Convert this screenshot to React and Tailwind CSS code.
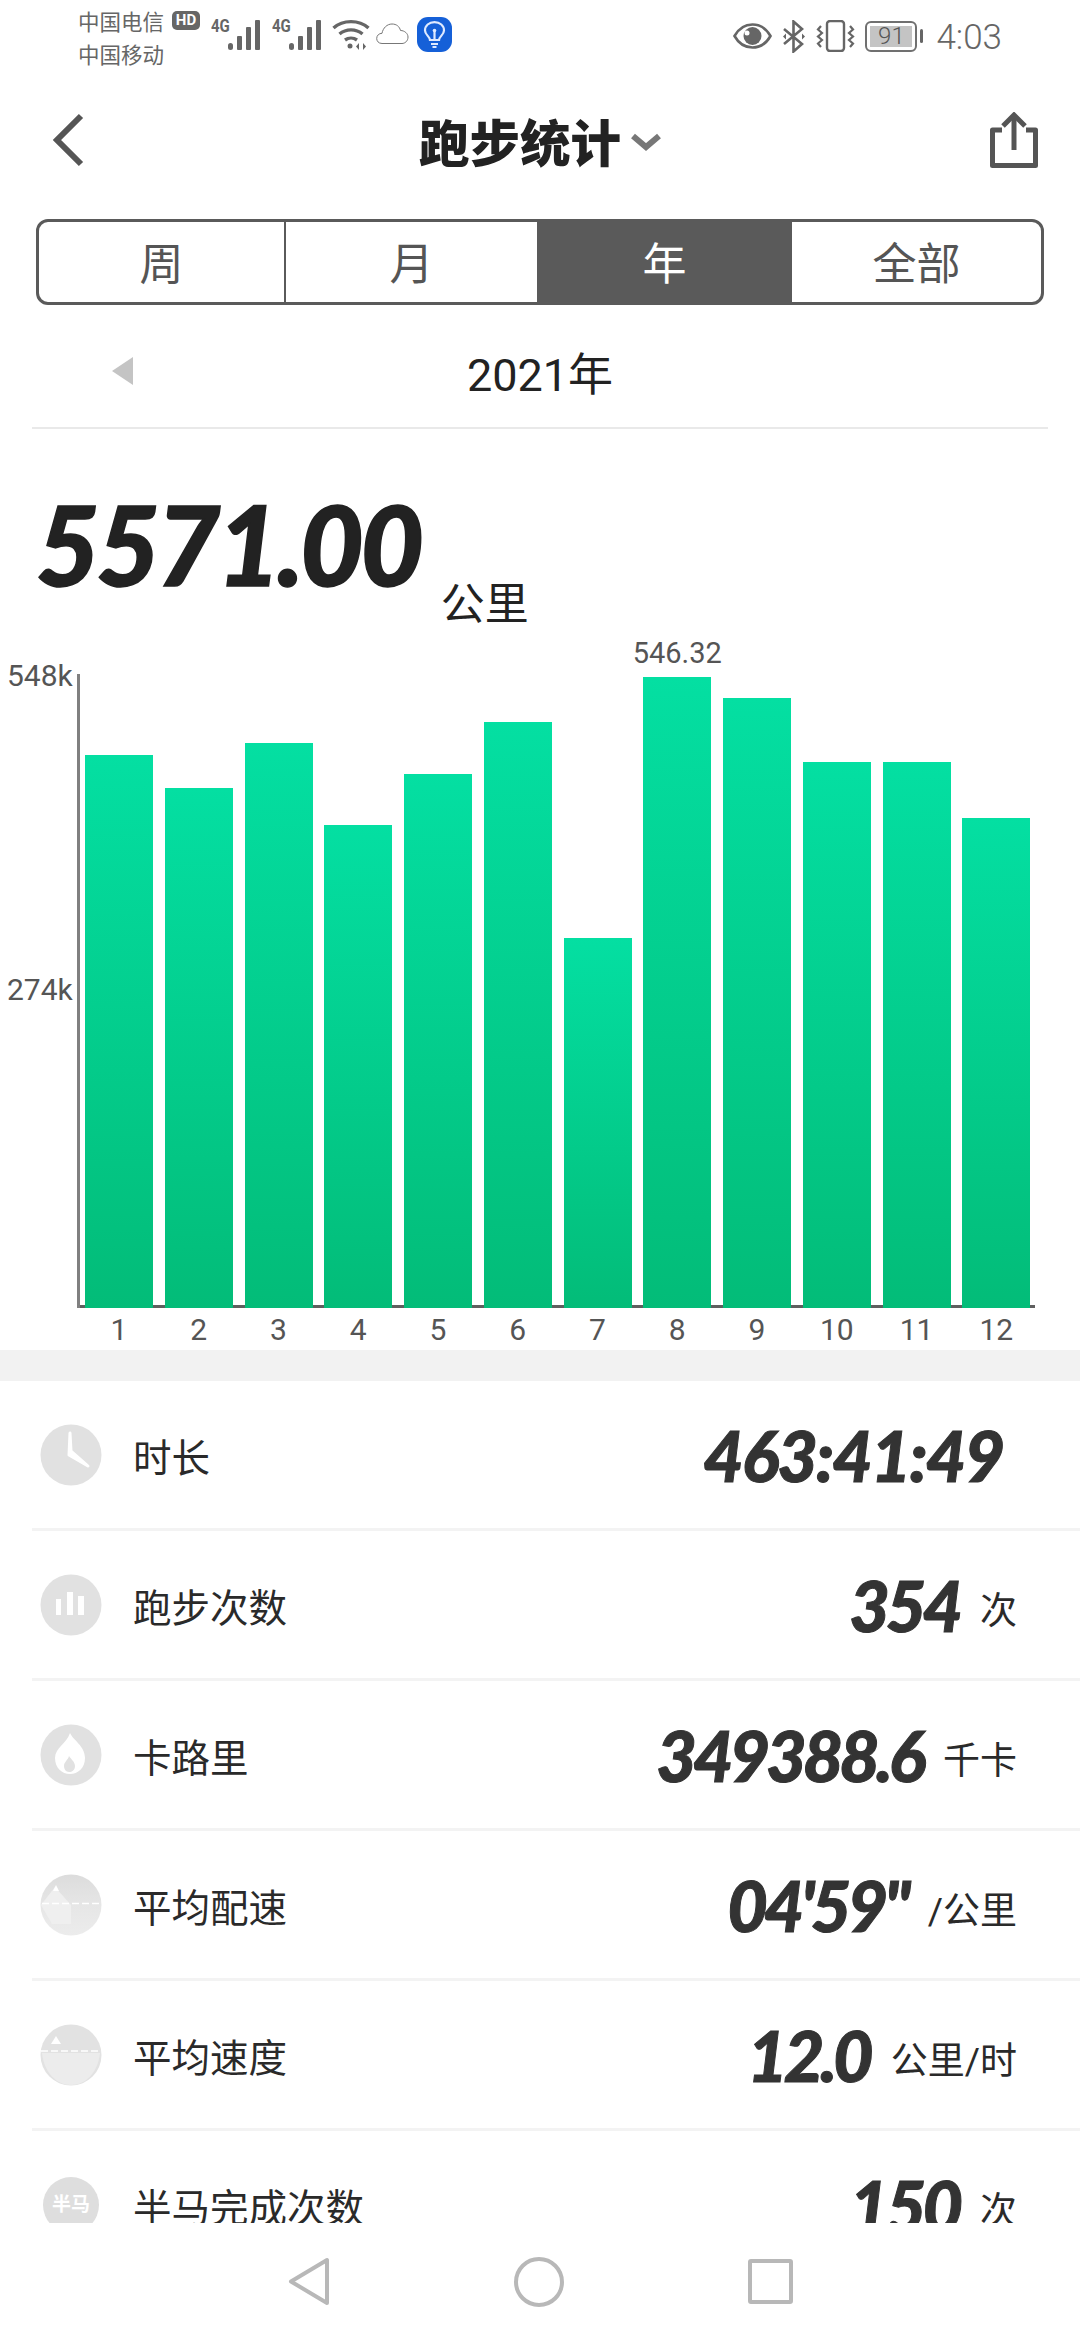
const bars = [
	{ label: '1', height: 553 },
	{ label: '2', height: 520 },
	{ label: '3', height: 565 },
	{ label: '4', height: 483 },
	{ label: '5', height: 534 },
	{ label: '6', height: 586 },
	{ label: '7', height: 370 },
	{ label: '8', height: 631, value: '546.32' },
	{ label: '9', height: 610 },
	{ label: '10', height: 546 },
	{ label: '11', height: 546 },
	{ label: '12', height: 490 },
];

const SignalIcon = () => (
	<svg width="32" height="32" viewBox="0 0 32 32" className="block shrink-0">
		<rect x="0" y="24" width="5" height="7" rx="2.500" fill="#666" />
		<rect x="9" y="17" width="5" height="14" rx="1" fill="#666" />
		<rect x="18" y="8" width="5" height="23" rx="1" fill="#666" />
		<rect x="27" y="1" width="5" height="30" rx="1" fill="#666" />
	</svg>
);

const WifiIcon = () => (
	<svg width="38" height="32" viewBox="0 0 38 32" fill="none" stroke="#666" strokeWidth="3.400" className="block">
		<path d="M1.500 9 C11 0.500 27 0.500 36.500 9" />
		<path d="M7.500 15 C14 9.500 24 9.500 30.500 15" />
		<path d="M13 21 C16.500 18.500 21.500 18.500 25 21" />
		<circle cx="18" cy="27" r="2.500" fill="#666" stroke="none" />
		<path d="M27 24 L24 27.500 L27 31 Z M31 24 L34 27.500 L31 31 Z" fill="#666" stroke="none" />
	</svg>
);

const CloudIcon = () => (
	<svg width="33" height="22" viewBox="0 0 33 22" fill="none" stroke="#777" strokeWidth="1" className="block">
		<path d="M6 20.500 C2.500 20.500 0.700 18 0.700 15.500 C0.700 12.500 3 10.300 6 10.300 C7 5 11 1 16 1 C20.500 1 23.500 3.500 24.500 7.500 C28.500 7.500 32 10.500 32 14 C32 18 29 20.500 26 20.500 Z" />
	</svg>
);

const BulbIcon = () => (
	<div className="w-[35px] h-[35px] rounded-[11px] bg-[#1560d8] flex items-center justify-center">
		<svg width="23" height="27" viewBox="0 0 23 27" fill="none" stroke="#dfeaff" strokeWidth="2.200">
			<path d="M7 19 C7 15.500 2 14 2 9.500 C2 4.500 6 1.200 11.500 1.200 C17 1.200 21 4.500 21 9.500 C21 14 16 15.500 16 19 Z" />
			<path d="M8 23 H15 M9.500 26 H13.500" />
			<circle cx="11.500" cy="9.500" r="1.800" fill="#dfeaff" stroke="none" />
			<path d="M11.500 10 V18" />
		</svg>
	</div>
);

const EyeIcon = () => (
	<svg width="39" height="26" viewBox="0 0 39 26" className="block">
		<path d="M1.500 13 C6 5 12 1.500 19.500 1.500 C27 1.500 33 5 37.500 13 C33 21 27 24.500 19.500 24.500 C12 24.500 6 21 1.500 13 Z" fill="none" stroke="#666" strokeWidth="2.600" />
		<circle cx="19.500" cy="13" r="9" fill="#666" />
		<circle cx="14" cy="10" r="2.500" fill="#fff" />
	</svg>
);

const BluetoothIcon = () => (
	<svg width="24" height="33" viewBox="0 0 24 33" fill="none" stroke="#666" strokeWidth="2.600" className="block">
		<path d="M2 9 L20 24 L11.500 31.500 V1.500 L20 9 L2 24" />
		<path d="M1 16.500 L4 13.500 V19.500 Z M23 16.500 L20 13.500 V19.500 Z" fill="#666" stroke="none" />
	</svg>
);

const VibrateIcon = () => (
	<svg width="39" height="32" viewBox="0 0 39 32" fill="none" stroke="#666" className="block">
		<rect x="11" y="1" width="17" height="30" rx="3" strokeWidth="2.400" />
		<path d="M5 6 L2 9.500 L6 13 L2 16.500 L6 20 L2 23.500 L5 27" strokeWidth="2.200" />
		<path d="M34 6 L37 9.500 L33 13 L37 16.500 L33 20 L37 23.500 L34 27" strokeWidth="2.200" />
	</svg>
);

const Battery = () => (
	<div className="flex items-center gap-[3px]">
		<div className="w-[52px] h-[31px] rounded-[6px] border-[2.500px] border-[#707070] p-[3px] flex">
			<div className="flex-1 bg-[#c4c4c4] flex items-center justify-center text-[24px] leading-none text-[#555] font-light">91</div>
		</div>
		<div className="w-[3px] h-[14px] bg-[#666] rounded-sm" />
	</div>
);

const CircleIcon = ({ children }) => (
	<svg width="62" height="62" viewBox="0 0 62 62" className="block shrink-0">
		<circle cx="31" cy="31" r="30.500" fill="#e1e1e1" />
		{children}
	</svg>
);

const ClockIcon = () => (
	<CircleIcon>
		<path d="M30 9 L29 31 L48 42 L31 27 Z" fill="#fff" stroke="#fff" strokeWidth="3" strokeLinejoin="round" />
	</CircleIcon>
);

const BarsIcon = () => (
	<CircleIcon>
		<rect x="16" y="25" width="5" height="16" fill="#fff" />
		<rect x="27" y="18" width="6" height="23" fill="#fff" />
		<rect x="38" y="22" width="6" height="19" fill="#fff" />
	</CircleIcon>
);

const FlameIcon = () => (
	<CircleIcon>
		<path d="M30 9 C33 16 45 22 45 34 C45 44 38 50 30 50 C22 50 15 44 15 34 C15 24 27 19 30 9 Z" fill="#fff" />
		<path d="M29 32 C31 35 35 38 35 42 C35 46 32 48 29 48 C26 48 24 45 24 42 C24 38 28 36 29 32 Z" fill="#e1e1e1" />
	</CircleIcon>
);

const PaceIcon = () => (
	<svg width="62" height="62" viewBox="0 0 62 62" className="block shrink-0">
		<defs>
			<linearGradient id="paceFill" x1="0" y1="0" x2="0" y2="1">
				<stop offset="0" stopColor="#dcdcdc" />
				<stop offset="0.5" stopColor="#e6e6e6" />
				<stop offset="1" stopColor="#ececec" />
			</linearGradient>
		</defs>
		<circle cx="31" cy="31" r="30.500" fill="url(#paceFill)" />
		<path d="M1 31 L15 13 L31 31 L31 50 L12 50 Z" fill="#efefef" />
		<path d="M13 17 L16 11 L19 17 Z" fill="#fff" />
		<path d="M2 29.500 H60" stroke="#fff" strokeWidth="1.500" strokeDasharray="7 3" />
	</svg>
);

const SpeedIcon = () => (
	<svg width="62" height="62" viewBox="0 0 62 62" className="block shrink-0">
		<circle cx="31" cy="31" r="30.500" fill="#e2e2e2" />
		<path d="M2 29 H60 C58 48 46 61 31 61 C16 61 4 48 2 29 Z" fill="#ececec" />
		<path d="M11 20 L16 12 L21 20 Z" fill="#fff" />
		<path d="M1 27 H61" stroke="#fff" strokeWidth="1.500" strokeDasharray="7 3" />
	</svg>
);

const HalfMarathonIcon = () => (
	<div className="w-[56px] h-[56px] rounded-full bg-[#dedede] flex items-center justify-center text-[19px] leading-none font-bold text-white shrink-0 mx-[3px]">
		半马
	</div>
);

const rows = [
	{ label: '时长', value: '463:41:49', unit: '', icon: <ClockIcon />, valueClass: 'tracking-[-2px] mr-[14px]' },
	{ label: '跑步次数', value: '354', unit: '次', icon: <BarsIcon /> },
	{ label: '卡路里', value: '349388.6', unit: '千卡', icon: <FlameIcon /> },
	{ label: '平均配速', value: `04'59"`, unit: '/公里', icon: <PaceIcon /> },
	{ label: '平均速度', value: '12.0', unit: '公里/时', icon: <SpeedIcon /> },
	{ label: '半马完成次数', value: '150', unit: '次', icon: <HalfMarathonIcon /> },
];

const StatRow = ({ label, value, unit, icon, valueClass }) => (
	<div className="h-[150px] shrink-0 border-b-[3px] border-[#f3f3f3] flex items-center pl-[8px] pr-[63px]">
		{icon}
		<span className="ml-[31px] mt-[10px] text-[38.500px] text-[#2a2a2a] leading-none">{label}</span>
		<div className="ml-auto flex items-baseline gap-[21px]">
			<span className={`font-['Lato',sans-serif] font-black italic text-[70px] leading-none text-[#333] [-webkit-text-stroke:1px_#333] ${valueClass || 'tracking-[-4px]'}`}>{value}</span>
			{unit && <span className="text-[37px] leading-none text-[#2a2a2a] -translate-y-[8px]">{unit}</span>}
		</div>
	</div>
);

export default function App() {
	return (
		<div className="w-[1080px] h-[2340px] bg-white flex flex-col overflow-hidden font-['Roboto','Noto_Sans_CJK_SC',sans-serif]">
			<div className="flex-1 min-h-0 overflow-hidden">
				{/* status bar */}
				<div className="h-[76px] flex pl-[78px] pr-[78px] pt-[6px]">
					<div className="text-[21.500px] leading-[33px] text-[#666] w-[94px] shrink-0 flex flex-col whitespace-nowrap">
						<div className="relative">
							中国电信
							<span className="absolute left-[94px] top-[5px] w-[28px] h-[19px] rounded-[5px] bg-[#666] text-white text-[15px] leading-[19px] font-bold text-center">HD</span>
						</div>
						<div>中国移动</div>
					</div>
					<div className="flex items-start pt-[13px] ml-[39px]">
						<span className="text-[15px] font-bold leading-[14px] text-[#666] w-[17px] shrink-0 scale-y-125">4G</span>
						<SignalIcon />
						<span className="text-[15px] font-bold leading-[14px] text-[#666] w-[17px] shrink-0 ml-[12px] scale-y-125">4G</span>
						<SignalIcon />
						<span className="ml-[11px]"><WifiIcon /></span>
						<span className="ml-[6px] mt-[4px]"><CloudIcon /></span>
						<span className="ml-[8px] -mt-[2px]"><BulbIcon /></span>
					</div>
					<div className="ml-auto flex items-center gap-[10px] h-[38px] mt-[11px]">
						<EyeIcon />
						<BluetoothIcon />
						<VibrateIcon />
						<Battery />
						<span className="text-[35px] font-light text-[#666] leading-none ml-[3px] mt-[2px]">4:03</span>
					</div>
				</div>

				{/* header */}
				<div className="h-[143px] relative flex items-center justify-center pb-[4px]">
					<svg width="32" height="54" viewBox="0 0 32 54" fill="none" stroke="#555" strokeWidth="6" className="absolute left-[52px] top-[37px]">
						<path d="M29 3 L5 27 L29 51" />
					</svg>
					<div className="flex items-center">
						<span className="text-[50.500px] font-black leading-none text-[#222]">跑步统计</span>
						<svg width="30" height="20" viewBox="0 0 30 20" fill="none" stroke="#777" strokeWidth="6" className="ml-[10px] -mt-[8px]">
							<path d="M2 4 L15 15 L28 4" />
						</svg>
					</div>
					<svg width="48" height="56" viewBox="0 0 48 56" fill="none" stroke="#555" className="absolute left-[990px] top-[36px]">
						<path d="M12 18 H2.500 V53.500 H45.500 V18 H36" strokeWidth="5" strokeLinejoin="round" />
						<path d="M24 38 V6" strokeWidth="5" />
						<path d="M13 14 L24 3 L35 14" strokeWidth="5" />
					</svg>
				</div>

				{/* range tabs */}
				<div className="mx-[36px] h-[86px] border-[3px] border-[#5a5a5a] rounded-[12px] overflow-hidden flex text-[44px] text-[#555] leading-none">
					<div className="w-[247px] border-r-[2px] border-[#5a5a5a] flex items-center justify-center pt-[5px]">周</div>
					<div className="w-[251px] flex items-center justify-center pt-[5px]">月</div>
					<div className="w-[255px] bg-[#5a5a5a] text-white flex items-center justify-center pt-[5px]">年</div>
					<div className="flex-1 flex items-center justify-center pt-[5px]">全部</div>
				</div>

				{/* year picker */}
				<div className="h-[124px] mx-[32px] border-b-[2px] border-[#e9e9e9] relative flex items-center justify-center pt-[19px]">
					<svg width="21" height="28" viewBox="0 0 21 28" className="absolute left-[80px] top-[52px]">
						<path d="M21 0 V28 L0 14 Z" fill="#c4c4c4" />
					</svg>
					<span className="text-[45px] leading-none text-[#222]">2021年</span>
				</div>

				{/* total */}
				<div className="h-[208px] pl-[36px] flex items-start">
					<span className="mt-[59px] font-['Lato',sans-serif] font-black italic text-[110px] leading-none text-[#222] tracking-[-3.500px] [-webkit-text-stroke:1.500px_#222]">5571.00</span>
					<span className="mt-[154px] ml-[20px] text-[44px] leading-none text-[#222]">公里</span>
				</div>

				{/* chart */}
				<div className="h-[713px] flex pt-[37px]">
					<div className="w-[77px] pl-[7px] text-[30px] leading-none text-[#555] shrink-0">
						<div className="-mt-[13px]">548k</div>
						<div className="mt-[284px]">274k</div>
					</div>
					<div className="flex-1">
						<div className="w-[958px] h-[634px] border-l-[3px] border-[#808080] relative pl-[5px] flex items-end gap-[11.750px]">
							<div className="absolute left-0 right-0 bottom-0 h-[3px] bg-[#5f5f5f]" />
							{bars.map((bar) => (
								<div
									key={bar.label}
									className="relative w-[68px] shrink-0 bg-gradient-to-b from-[#04dfa2] to-[#03bc78]"
									style={{ height: bar.height }}
								>
									{bar.value && (
										<span className="absolute left-1/2 -translate-x-1/2 -top-[38px] text-[29px] leading-none text-[#555]">{bar.value}</span>
									)}
								</div>
							))}
						</div>
						<div className="flex pl-[5px] pt-[7px] gap-[11.750px] ml-[3px] text-[30px] leading-none text-[#555]">
							{bars.map((bar) => (
								<div key={bar.label} className="w-[68px] shrink-0 text-center">{bar.label}</div>
							))}
						</div>
					</div>
				</div>

				<div className="h-[31px] bg-[#f2f2f2]" />

				{/* stats */}
				<div className="ml-[32px] flex flex-col">
					{rows.map((row) => (
						<StatRow key={row.label} {...row} />
					))}
				</div>
			</div>

			{/* nav bar */}
			<div className="h-[117px] shrink-0 flex items-center justify-center gap-[184px]">
				<svg width="42" height="50" viewBox="0 0 42 50" fill="none" stroke="#b8b8b8" strokeWidth="4" strokeLinejoin="round">
					<path d="M39 3 V46 L3 24.500 Z" />
				</svg>
				<div className="w-[50px] h-[50px] rounded-full border-[4px] border-[#b8b8b8]" />
				<div className="w-[45px] h-[45px] rounded-[3px] border-[4px] border-[#b8b8b8]" />
			</div>
		</div>
	);
}
